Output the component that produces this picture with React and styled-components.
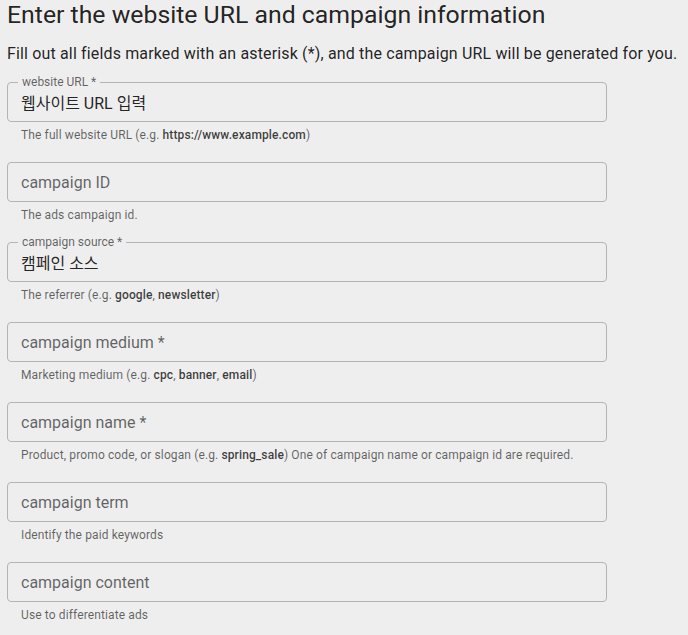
import React from 'react';
import styled, { createGlobalStyle } from 'styled-components';

const GlobalStyle = createGlobalStyle`
  body {
    margin: 0;
    background-color: #eeeeee;
    font-family: Roboto, "Noto Sans CJK KR", "Liberation Sans", sans-serif;
  }
`;

const Page = styled.div`
  padding: 0 7px;
  display: flex;
  flex-direction: column;
`;

const Title = styled.h1`
  margin: 0;
  font-size: 24.8px;
  line-height: 30px;
  font-weight: 400;
  color: rgba(0, 0, 0, 0.87);
`;

const Subtitle = styled.p`
  margin: 12px 0 16px;
  font-size: 16px;
  line-height: 24px;
  letter-spacing: 0.15px;
  color: rgba(0, 0, 0, 0.87);
`;

const FieldList = styled.div`
  display: flex;
  flex-direction: column;
  gap: 17px;
  width: 600px;
`;

const Field = styled.div`
  display: flex;
  flex-direction: column;
`;

const InputBox = styled.div`
  position: relative;
  box-sizing: border-box;
  height: 40px;
  border: 1px solid #b4b4b4;
  border-radius: 4px;
  display: flex;
  align-items: center;
  padding: 0 13px;
`;

const FloatLabel = styled.span`
  position: absolute;
  top: -7px;
  left: 10px;
  padding: 0 4px;
  background-color: #eeeeee;
  font-size: 12px;
  line-height: 12px;
  color: rgba(0, 0, 0, 0.6);
`;

const Value = styled.span`
  font-size: 16px;
  color: ${({ $empty }) => ($empty ? 'rgba(0, 0, 0, 0.6)' : 'rgba(0, 0, 0, 0.87)')};
`;

const Helper = styled.p`
  margin: 3px 14px 0;
  font-size: 12px;
  line-height: 20px;
  letter-spacing: 0.12px;
  white-space: nowrap;
  color: rgba(0, 0, 0, 0.6);

  b {
    font-weight: 500;
    color: rgba(0, 0, 0, 0.75);
  }
`;

const fields = [
  {
    label: 'website URL *',
    value: '웹사이트 URL 입력',
    helper: <>The full website URL (e.g. <b>https://www.example.com</b>)</>,
  },
  {
    label: 'campaign ID',
    helper: <>The ads campaign id.</>,
  },
  {
    label: 'campaign source *',
    value: '캠페인 소스',
    helper: <>The referrer (e.g. <b>google</b>, <b>newsletter</b>)</>,
  },
  {
    label: 'campaign medium *',
    helper: <>Marketing medium (e.g. <b>cpc</b>, <b>banner</b>, <b>email</b>)</>,
  },
  {
    label: 'campaign name *',
    helper: (
      <>
        Product, promo code, or slogan (e.g. <b>spring_sale</b>) One of campaign name or campaign id are required.
      </>
    ),
  },
  {
    label: 'campaign term',
    helper: <>Identify the paid keywords</>,
  },
  {
    label: 'campaign content',
    helper: <>Use to differentiate ads</>,
  },
];

function TextField({ label, value, helper }) {
  return (
    <Field>
      <InputBox>
        {value && <FloatLabel>{label}</FloatLabel>}
        <Value $empty={!value}>{value || label}</Value>
      </InputBox>
      <Helper>{helper}</Helper>
    </Field>
  );
}

export default function App() {
  return (
    <Page>
      <GlobalStyle />
      <Title>Enter the website URL and campaign information</Title>
      <Subtitle>
        Fill out all fields marked with an asterisk (*), and the campaign URL will be generated for you.
      </Subtitle>
      <FieldList>
        {fields.map((f) => (
          <TextField key={f.label} {...f} />
        ))}
      </FieldList>
    </Page>
  );
}
